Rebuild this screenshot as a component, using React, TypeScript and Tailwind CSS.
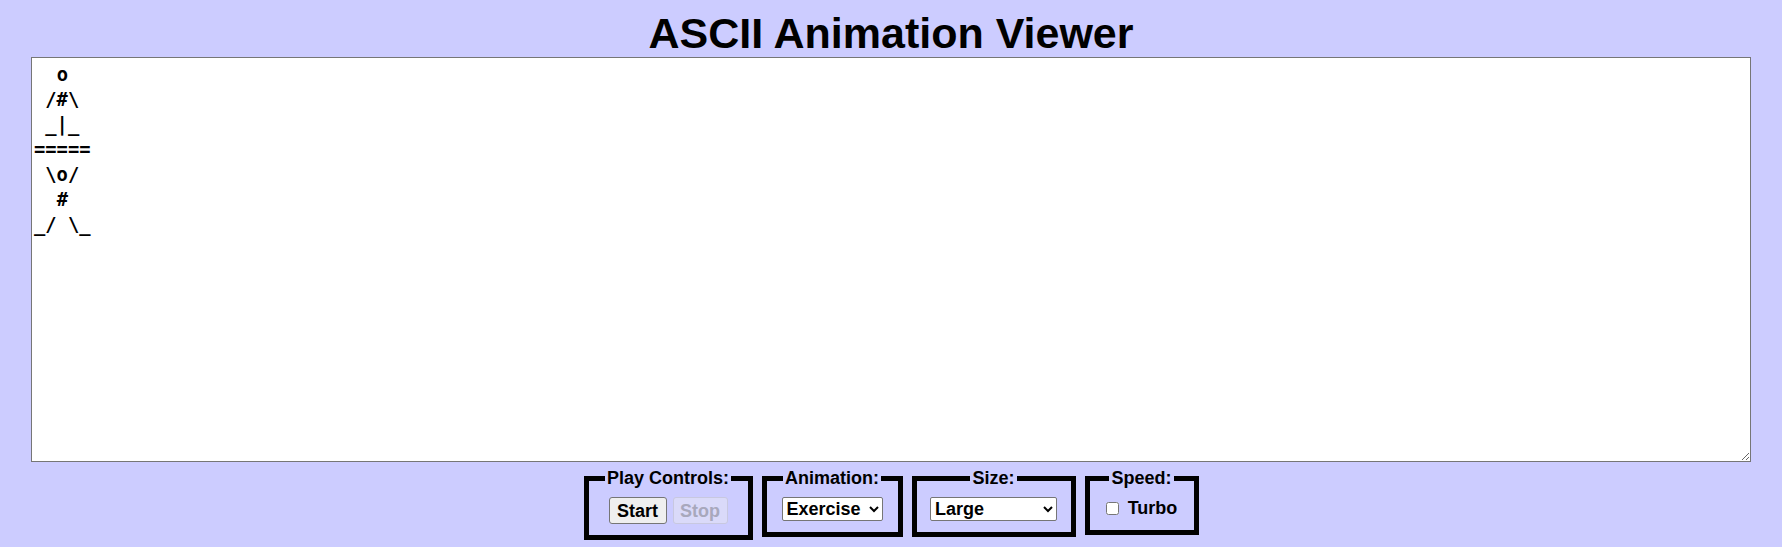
import { useState } from "react";

const FRAME = `  o
 /#\\
 _|_
=====
 \\o/
  #
_/ \\_`;

function Box({ title, width, children }: { title: string; width: string; children: React.ReactNode }) {
  return (
    <fieldset className={`${width} border-[5px] border-black px-[13px] pt-[6px] pb-[11px] text-center`}>
      <legend className="mx-auto px-[2px] text-[18px] font-bold leading-[21px]">{title}</legend>
      {children}
    </fieldset>
  );
}

export default function App() {
  const [text, setText] = useState(FRAME);
  const [anim, setAnim] = useState("Exercise");
  const [size, setSize] = useState("Large");
  const [turbo, setTurbo] = useState(false);

  return (
    <div className="min-h-screen bg-[#ccccff] font-['Liberation_Sans',Arial,sans-serif] text-black">
      <h1 className="pt-[9px] text-center text-[43px] font-bold leading-[48px]">ASCII Animation Viewer</h1>

      <textarea
        value={text}
        onChange={(e) => setText(e.target.value)}
        className="mx-auto block h-[405px] w-[1720px] border border-[#767676] bg-white px-[2px] pt-[4px] pb-[2px] font-['DejaVu_Sans_Mono',monospace] text-[18.8px] font-bold leading-[25px]"
      />

      <div className="mt-[6px] flex items-start justify-center gap-[9px]">
        <Box title="Play Controls:" width="w-[169px]">
          <div className="flex justify-center gap-[6px] pt-[2px]">
            <button className="h-[27px] w-[58px] rounded-[3px] border border-[#767676] bg-[#efefef] text-[18px] font-bold">
              Start
            </button>
            <button
              disabled
              className="h-[27px] w-[55px] rounded-[3px] border border-[#c8c8e0] bg-[#dadaf9] text-[18px] font-bold text-[#a8a8bc]"
            >
              Stop
            </button>
          </div>
        </Box>

        <Box title="Animation:" width="w-[141px]">
          <div className="flex justify-center pt-[2px]">
            <select
              value={anim}
              onChange={(e) => setAnim(e.target.value)}
              className="h-[24px] w-[101px] rounded-[2px] border border-[#767676] bg-white text-[18px] font-bold"
            >
              <option>Blank</option>
              <option>Custom</option>
              <option>Exercise</option>
              <option>Juggler</option>
              <option>Bike</option>
              <option>Dive</option>
            </select>
          </div>
        </Box>

        <Box title="Size:" width="w-[164px]">
          <div className="flex justify-center pt-[2px]">
            <select
              value={size}
              onChange={(e) => setSize(e.target.value)}
              className="h-[24px] w-[127px] rounded-[2px] border border-[#767676] bg-white text-[18px] font-bold"
            >
              <option>Tiny</option>
              <option>Small</option>
              <option>Medium</option>
              <option>Large</option>
              <option>Extra Large</option>
              <option>XXL</option>
            </select>
          </div>
        </Box>

        <Box title="Speed:" width="w-[114px]">
          <label className="flex items-center justify-center gap-[9px] pt-[3px] text-[18px] font-bold leading-[21px]">
            <input type="checkbox" checked={turbo} onChange={(e) => setTurbo(e.target.checked)} className="h-[13px] w-[13px]" />
            Turbo
          </label>
        </Box>
      </div>
    </div>
  );
}
